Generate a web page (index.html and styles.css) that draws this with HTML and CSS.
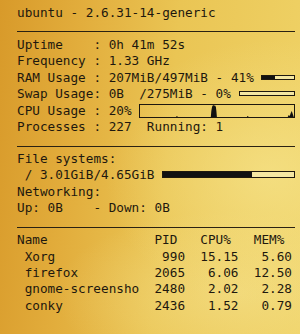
FILE: index.html
```html
<!DOCTYPE html>
<html lang="en">
<head>
    <meta charset="UTF-8">
    <title>Conky</title>
    <link rel="stylesheet" href="styles.css">
</head>
<body>
    <div class="conky">
        <div class="line">ubuntu - 2.6.31-14-generic</div>
        <div class="rule"></div>

        <div class="line">Uptime    : 0h 41m 52s</div>
        <div class="line">Frequency : 1.33 GHz</div>
        <div class="line row">
            <span class="label">RAM Usage : 207MiB/497MiB - 41% </span>
            <div class="bar thin"><div class="fill" style="width: 41%"></div></div>
        </div>
        <div class="line row">
            <span class="label">Swap Usage: 0B  /275MiB - 0% </span>
            <div class="bar thin"><div class="fill" style="width: 0%"></div></div>
        </div>
        <div class="line row">
            <span class="label">CPU Usage : 20% </span>
            <div class="graph"><svg viewBox="0 0 152 12" preserveAspectRatio="none"><rect x="36" y="11" width="1" height="1"/><polygon points="70,12 70.5,6 71,3 71.5,1 72.5,0 73.5,1 74,0 75,2 75.5,6 76,12"/><rect x="106" y="11" width="1" height="1"/><polygon points="146,12 147,10 148,11 149,8 150,6 151,9 152,12"/></svg></div>
        </div>
        <div class="line">Processes : 227  Running: 1</div>
        <div class="rule"></div>

        <div class="line">File systems:</div>
        <div class="line row">
            <span class="label"> / 3.01GiB/4.65GiB </span>
            <div class="bar thick"><div class="fill" style="width: 68%"></div></div>
        </div>
        <div class="line">Networking:</div>
        <div class="line">Up: 0B    - Down: 0B</div>
        <div class="rule"></div>

        <div class="procs">
            <span>Name</span><span>PID</span><span class="head">CPU%</span><span class="head">MEM%</span>
            <span class="name">Xorg</span><span class="num">990</span><span class="num">15.15</span><span class="num">5.60</span>
            <span class="name">firefox</span><span class="num">2065</span><span class="num">6.06</span><span class="num">12.50</span>
            <span class="name">gnome-screensho</span><span class="num">2480</span><span class="num">2.02</span><span class="num">2.28</span>
            <span class="name">conky</span><span class="num">2436</span><span class="num">1.52</span><span class="num">0.79</span>
        </div>
    </div>
</body>
</html>
```

FILE: styles.css
```css
* {
    box-sizing: border-box;
    margin: 0;
    padding: 0;
}

html, body {
    width: 100%;
    height: 100%;
    overflow: hidden;
}

body {
    background:
        radial-gradient(ellipse 55% 40% at 90% 52%, rgba(246, 228, 140, 0.7), rgba(246, 228, 140, 0) 100%),
        radial-gradient(ellipse 60% 25% at 78% 88%, rgba(247, 230, 150, 0.5), rgba(247, 230, 150, 0) 100%),
        linear-gradient(95deg, #d89a2a 0%, #e2ad3c 25%, #eac554 55%, #efd266 100%);
    font-family: "DejaVu Sans Mono", monospace;
    font-size: 12.7px;
    color: #1e180e;
}

.conky {
    padding: 5px 5px 0 17px;
}

.line {
    height: 16.44px;
    line-height: 16.44px;
    white-space: pre;
}

.row {
    display: flex;
    align-items: center;
}

.rule {
    height: 11px;
    border-bottom: 1px solid #2a2112;
    margin-bottom: 4.44px;
}

.bar {
    flex: 1;
    border: 1px solid #1e180e;
    background-color: #f4e7a2;
    white-space: normal;
}

.bar.thin {
    height: 5px;
    margin-top: -1px;
}

.bar.thick {
    height: 7px;
    margin-top: -2px;
}

.fill {
    height: 100%;
    background-color: #111;
}

.graph {
    flex: 1;
    height: 14px;
    border: 1px solid #1e180e;
    white-space: normal;
}

.graph svg {
    display: block;
    width: 100%;
    height: 100%;
    fill: #111;
}

/* process table: columns measured in characters */
.procs {
    display: grid;
    grid-template-columns: 18ch 4ch 7ch 7ch;
    line-height: 16.44px;
    white-space: pre;
}

.procs .head {
    padding-left: 2ch;
}

.procs .name {
    padding-left: 1ch;
}

.procs .num {
    text-align: right;
}
```
